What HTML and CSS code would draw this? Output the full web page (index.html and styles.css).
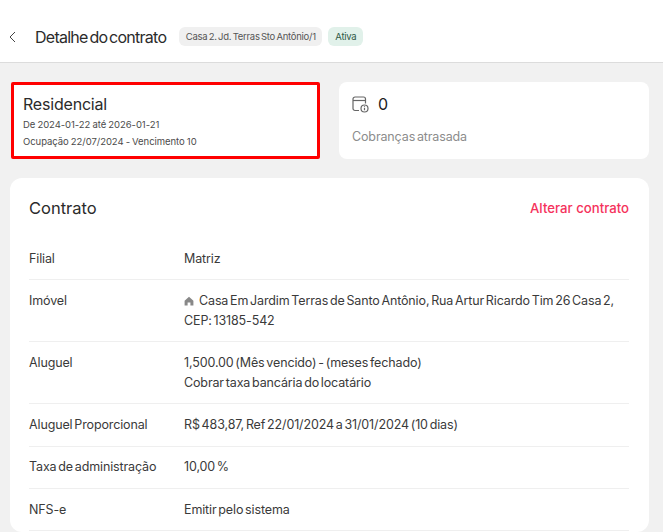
FILE: index.html
```
<!DOCTYPE html>
<html lang="pt-BR">
<head>
<meta charset="utf-8">
<title>Detalhe do contrato</title>
<link rel="stylesheet" href="styles.css">
</head>
<body>
<header class="topbar">
  <svg class="back" width="7" height="12" viewBox="0 0 7 12" fill="none"><path d="M6 1 1 6l5 5" stroke="#444" stroke-width="1"/></svg>
  <h1 class="title">Detalhe do contrato</h1>
  <span class="tag tag-grey">Casa 2. Jd. Terras Sto Antônio/1</span>
  <span class="tag tag-green">Ativa</span>
</header>
<main class="content">
  <section class="summary">
    <div class="card card-marked">
      <div class="card-title">Residencial</div>
      <div class="card-line">De 2024-01-22 até 2026-01-21</div>
      <div class="card-line">Ocupação 22/07/2024 - Vencimento 10</div>
    </div>
    <div class="card card-stat">
      <div class="stat-head">
        <svg width="17" height="17" viewBox="0 0 17 17" fill="none" stroke="#666" stroke-width="1.200"><path d="M7 14.500H3a2 2 0 0 1-2-2V3a2 2 0 0 1 2-2h8.500a2 2 0 0 1 2 2v4.500"/><path d="M1 4.500h12.500"/><circle cx="12.500" cy="12.500" r="3.500"/><path d="M12.500 11.800v2.500M12.500 10.300v.7"/></svg>
        <span class="stat-num">0</span>
      </div>
      <div class="stat-label">Cobranças atrasada</div>
    </div>
  </section>
  <section class="panel">
    <div class="panel-head">
      <h2 class="panel-title">Contrato</h2>
      <a class="panel-link">Alterar contrato</a>
    </div>
    <div class="row"><div class="key">Filial</div><div class="val">Matriz</div></div>
    <div class="row"><div class="key">Imóvel</div><div class="val"><svg class="house" width="10" height="10" viewBox="0 0 10 10"><path d="M5 .8 .6 4.800v4.600h3V6.500h2.800v2.900h3V4.800z" fill="#888"/></svg>Casa Em Jardim Terras de Santo Antônio, Rua Artur Ricardo Tim 26 Casa 2,<br>CEP: 13185-542</div></div>
    <div class="row"><div class="key">Aluguel</div><div class="val">1,500.00 (Mês vencido) - (meses fechado)<br>Cobrar taxa bancária do locatário</div></div>
    <div class="row"><div class="key">Aluguel Proporcional</div><div class="val">R$ 483,87, Ref 22/01/2024 a 31/01/2024 (10 dias)</div></div>
    <div class="row"><div class="key">Taxa de administração</div><div class="val">10,00 %</div></div>
    <div class="row"><div class="key">NFS-e</div><div class="val">Emitir pelo sistema</div></div>
  </section>
</main>
</body>
</html>
```
FILE: styles.css
```
* { box-sizing: border-box; }
html, body { margin: 0; height: 100%; overflow: hidden; }
body { background: #f1f1f1; font-family: Inter, "Noto Sans", sans-serif; color: #333; }
.topbar { height: 63px; background: #fff; border-bottom: 1px solid #dcdcdc; display: flex; align-items: center; padding: 11px 0 0 9px; }
.back { margin-right: 19px; }
.title { margin: 0 13px 0 0; font-size: 16px; font-weight: 400; letter-spacing: -.74px; word-spacing: -2px; color: #2b2b2b; }
.tag { font-size: 9.500px; height: 19px; line-height: 19px; border-radius: 6px; padding: 0 6.500px; letter-spacing: -.27px; word-spacing: -1px; }
.tag-grey { background: #f0f0f0; color: #555; margin-right: 6px; }
.tag-green { background: #e1f1ea; color: #2f5a48; padding: 0 7px; }
.content { padding: 19px 14px 0 10px; }
.summary { display: grid; grid-template-columns: 310px 310px; column-gap: 19px; }
.card { height: 77px; background: #fff; border-radius: 8px; }
.card-marked { border: 3px solid #f00; border-radius: 2px; margin-left: 1px; padding: 9px 0 0 9px; }
.card-title { font-size: 16px; line-height: 20px; color: #2b2b2b; margin-bottom: 3px; letter-spacing: -.2px; }
.card-line { font-size: 9.500px; line-height: 16.500px; color: #4b4b4b; letter-spacing: -.05px; word-spacing: -.5px; }
.card-stat { padding: 12px 13px; }
.stat-head { display: flex; align-items: center; gap: 9px; height: 20px; }
.stat-num { font-size: 16px; color: #222; }
.stat-label { margin-top: 14px; font-size: 12.500px; line-height: 18px; color: #8c8c8c; letter-spacing: -.13px; word-spacing: -1.600px; }
.panel { margin-top: 19px; background: #fff; border-radius: 12px; padding: 0 20px 0 19px; height: 354px; }
.panel-head { display: flex; justify-content: space-between; align-items: center; height: 60px; }
.panel-title { margin: 0; font-size: 16.500px; font-weight: 400; color: #2b2b2b; }
.panel-link { font-size: 13.200px; font-weight: 500; color: #f5325c; }
.row { display: flex; padding: 10.800px 0 10.860px; border-bottom: 1px solid #efefef; font-size: 12.500px; line-height: 19.670px; color: #3a3a3a; letter-spacing: -.13px; word-spacing: -1.600px; }
.key { width: 155px; flex: none; }
.val { flex: 1; }
.house { margin: 0 5px -1px 0; }
```
